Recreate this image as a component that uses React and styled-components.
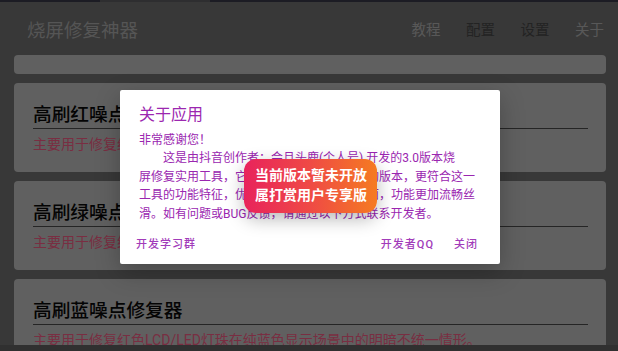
import React from 'react';
import styled, { createGlobalStyle } from 'styled-components';

const GlobalStyle = createGlobalStyle`
  html, body {
    margin: 0;
    padding: 0;
    background: #383838;
  }
  body {
    font-family: Roboto, "Noto Sans CJK SC", sans-serif;
  }
`;

const Screen = styled.div`
  position: relative;
  width: 618px;
  height: 351px;
  display: flex;
  flex-direction: column;
  overflow: hidden;
  background: #707070;
`;

const StatusStrip = styled.div`
  height: 2px;
  flex-shrink: 0;
  background: #383848;
  padding-left: 100px;
`;

const StripIndicator = styled.div`
  width: 110px;
  height: 2px;
  background: #5c5c60;
`;

const AppBar = styled.header`
  height: 53px;
  flex-shrink: 0;
  display: flex;
  align-items: center;
  justify-content: space-between;
  padding: 0 14px 0 27px;
  background: #707070;
`;

const AppTitle = styled.h1`
  margin: 0;
  font-size: 18.5px;
  font-weight: normal;
  color: #aaaaaa;
`;

const Nav = styled.nav`
  display: flex;
  gap: 25.5px;
`;

const NavItem = styled.span`
  font-size: 14.5px;
  color: ${(p) => (p.$dim ? '#464646' : '#b0b0b0')};
`;

const CardList = styled.main`
  flex: 1;
  min-height: 0;
  overflow: hidden;
  display: flex;
  flex-direction: column;
  gap: 9px;
  padding: 0 12px 0 14px;
`;

const Card = styled.section`
  flex-shrink: 0;
  background: #c0c0c0;
  border-radius: 4px;
  padding: ${(p) => (p.$empty ? '0' : '19px 18px 18px 19px')};
  min-height: ${(p) => (p.$empty ? '19px' : 'auto')};
  box-sizing: border-box;
`;

const CardTitle = styled.h2`
  margin: 0;
  font-size: 18.7px;
  line-height: 26px;
  font-weight: 500;
  color: #080808;
  border-bottom: 1px solid #4a4a4a;
`;

const CardDesc = styled.p`
  margin: 5px 0 0;
  font-size: 14px;
  line-height: 20px;
  color: #f25c84;
  white-space: nowrap;
`;

const BottomBar = styled.div`
  height: 6px;
  flex-shrink: 0;
  background: #606060;
`;

const Backdrop = styled.div`
  position: absolute;
  inset: 0;
  background: rgba(0, 0, 0, 0.5);
  display: flex;
  align-items: center;
  justify-content: center;
  padding: 3px 0 0 2px;
`;

const Dialog = styled.div`
  width: 380px;
  background: #fff;
  border-radius: 2px;
  padding-top: 14px;
  box-sizing: border-box;
  box-shadow: 0 8px 24px rgba(0, 0, 0, 0.25);
`;

const DialogTitle = styled.h3`
  margin: 0;
  padding: 0 19px;
  font-size: 16px;
  line-height: 22px;
  font-weight: normal;
  color: #9c27b0;
`;

const DialogBody = styled.div`
  margin-top: 5px;
  padding: 0 24px 0 19px;
  font-size: 12px;
  line-height: 18.5px;
  color: #9a26b0;
`;

const Para = styled.p`
  margin: 0;
  text-indent: ${(p) => (p.$indent ? '2em' : '0')};
`;

const Actions = styled.div`
  display: flex;
  align-items: center;
  margin-top: 6px;
  padding: 0 14px 7px 8px;
  gap: 4px;
`;

const Spacer = styled.div`
  flex: 1;
`;

const TextButton = styled.button`
  height: 28px;
  padding: 0 8px;
  border: 0;
  background: none;
  font-family: inherit;
  font-size: 11px;
  font-weight: 500;
  letter-spacing: 1px;
  color: #a23cba;
  cursor: pointer;
`;

const Toast = styled.div`
  position: absolute;
  left: 244px;
  top: 159px;
  width: 133px;
  box-sizing: border-box;
  padding: 6px 10px 8px 11px;
  border-radius: 12px;
  background: linear-gradient(90deg, #e8235c 0%, #ef4a45 50%, #f57b21 100%);
  box-shadow: 0 6px 18px rgba(0, 0, 0, 0.28);
  color: #fff;
  font-size: 14px;
  line-height: 20px;
  font-weight: bold;
  white-space: nowrap;
`;

const cards = [
  {
    title: '高刷红噪点修复器',
    desc: '主要用于修复红色LCD/LED灯珠在纯红色显示场景中的明暗不统一情形。',
  },
  {
    title: '高刷绿噪点修复器',
    desc: '主要用于修复绿色LCD/LED灯珠在纯绿色显示场景中的明暗不统一情形。',
  },
  {
    title: '高刷蓝噪点修复器',
    desc: '主要用于修复红色LCD/LED灯珠在纯蓝色显示场景中的明暗不统一情形。',
  },
];

export default function App() {
  return (
    <Screen>
      <GlobalStyle />
      <StatusStrip>
        <StripIndicator />
      </StatusStrip>
      <AppBar>
        <AppTitle>烧屏修复神器</AppTitle>
        <Nav>
          <NavItem>教程</NavItem>
          <NavItem $dim>配置</NavItem>
          <NavItem $dim>设置</NavItem>
          <NavItem>关于</NavItem>
        </Nav>
      </AppBar>
      <CardList>
        <Card $empty />
        {cards.map((c) => (
          <Card key={c.title}>
            <CardTitle>{c.title}</CardTitle>
            <CardDesc>{c.desc}</CardDesc>
          </Card>
        ))}
      </CardList>
      <BottomBar />

      <Backdrop>
        <Dialog>
          <DialogTitle>关于应用</DialogTitle>
          <DialogBody>
            <Para>非常感谢您！</Para>
            <Para $indent>
              这是由抖音创作者：会旦头鹿(个人号) 开发的3.0版本烧
              <br />
              屏修复实用工具，它是在旧版基础上全新重构版本，更符合这一工具的功能特征，优化了大量操作逻辑与界面，功能更加流畅丝滑。如有问题或BUG反馈，请通过以下方式联系开发者。
            </Para>
          </DialogBody>
          <Actions>
            <TextButton>开发学习群</TextButton>
            <Spacer />
            <TextButton>开发者QQ</TextButton>
            <TextButton>关闭</TextButton>
          </Actions>
        </Dialog>
      </Backdrop>
      <Toast>
        当前版本暂未开放
        <br />
        属打赏用户专享版
      </Toast>
    </Screen>
  );
}
